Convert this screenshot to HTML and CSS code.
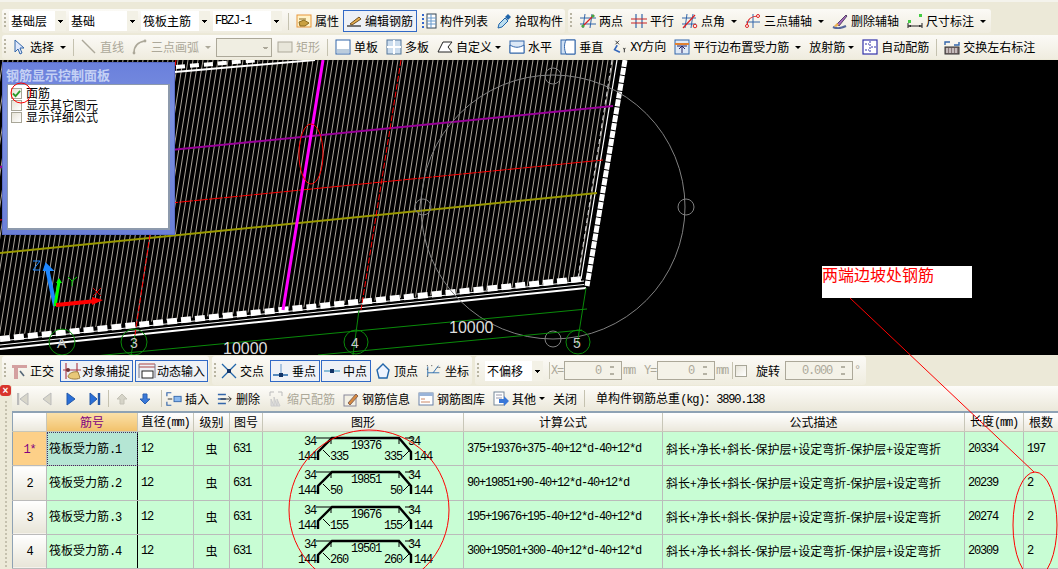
FILE: index.html
```html
<!DOCTYPE html>
<html lang="zh">
<head>
<meta charset="utf-8">
<title>钢筋编辑</title>
<link rel="stylesheet" href="styles.css">
</head>
<body>
<svg class="defs" xmlns="http://www.w3.org/2000/svg">
  <symbol id="i-prop" viewBox="0 0 16 16"><rect x="1" y="2" width="14" height="12" fill="#fff2c8" stroke="#e8963a"/><path d="M3 6h7M3 9l5-2 5 3-4 3H4z" fill="#c9a040" stroke="#8a6a20"/></symbol>
  <symbol id="i-edit" viewBox="0 0 16 16"><path d="M1 13h14" stroke="#222" stroke-width="1.2"/><path d="M4 11l9-7 2 2-9 6z" fill="#e8b050" stroke="#705020"/></symbol>
  <symbol id="i-list" viewBox="0 0 16 16"><path d="M1 2h2M1 6h2M1 10h2M1 14h2" stroke="#36c" stroke-width="2"/><rect x="6" y="1" width="9" height="14" fill="#fff" stroke="#345"/><path d="M6 5h9M6 8h9M6 11h9M10 1v14" stroke="#69c"/></symbol>
  <symbol id="i-pick" viewBox="0 0 16 16"><path d="M2 15l1-4 6-6 3 3-6 6z" fill="#bde" stroke="#26a"/><path d="M9 4l3-3 3 3-3 3z" fill="#26a"/></symbol>
  <symbol id="i-two" viewBox="0 0 16 16"><path d="M5 1L3 15M12 1l-2 14M0 5h16M0 11h16" stroke="#36a"/><path d="M2 14L14 2" stroke="#d22" stroke-width="1.2"/><circle cx="3" cy="13" r="1.6" fill="#4a4"/><circle cx="13" cy="3" r="1.6" fill="#4a4"/></symbol>
  <symbol id="i-par" viewBox="0 0 16 16"><path d="M5 1v14M11 1v14" stroke="#36a" stroke-width="1.2"/><path d="M0 6h16M0 10h16" stroke="#c22" stroke-width="1.2"/></symbol>
  <symbol id="i-ang" viewBox="0 0 16 16"><path d="M5 1L3 15M11 1L9 15M0 5h14M0 11h14" stroke="#36a"/><path d="M1 15L13 2" stroke="#d22" stroke-width="1.2"/><circle cx="13" cy="13" r="1.8" fill="none" stroke="#d22"/></symbol>
  <symbol id="i-arc" viewBox="0 0 16 16"><path d="M8 1v14M1 9h14" stroke="#36a"/><path d="M2 13C2 6 7 3 13 3" fill="none" stroke="#d22" stroke-width="1.2"/><circle cx="2" cy="13" r="1.5" fill="#fff" stroke="#d22"/><circle cx="13" cy="3" r="1.5" fill="#fff" stroke="#d22"/></symbol>
  <symbol id="i-del" viewBox="0 0 16 16"><path d="M1 14c4 2 9 1 13-1" stroke="#569" stroke-width="2" fill="none"/><path d="M5 11L14 2l1 1-8 10z" fill="#a86ac0" stroke="#546"/><path d="M2 13l3-3 2 2-3 2z" fill="#ecb050"/></symbol>
  <symbol id="i-dim" viewBox="0 0 16 16"><path d="M1 10v5M15 10v5M1 13h14" stroke="#222"/><path d="M1 13l3-1v2zM15 13l-3-1v2z" fill="#222"/><rect x="1" y="7" width="3" height="3" fill="#4c4"/><rect x="12" y="1" width="3" height="3" fill="#4c4"/></symbol>
  <symbol id="i-sel" viewBox="0 0 16 16"><path d="M4 1v12l3-3 2 5 2-1-2-5h4z" fill="#dfe8fb" stroke="#36a"/></symbol>
  <symbol id="i-line" viewBox="0 0 16 16"><path d="M1 1l13 13" stroke="#aca899" stroke-width="1.4"/></symbol>
  <symbol id="i-garc" viewBox="0 0 16 16"><path d="M2 14C2 7 6 3 13 2" fill="none" stroke="#aca899" stroke-width="1.6"/><circle cx="2" cy="14" r="1.4" fill="#aca899"/><circle cx="13" cy="2" r="1.4" fill="#aca899"/></symbol>
  <symbol id="i-rect" viewBox="0 0 16 16"><rect x="1" y="3" width="14" height="10" fill="#e8e6da" stroke="#aca899"/></symbol>
  <symbol id="i-one" viewBox="0 0 16 16"><rect x="1" y="1" width="14" height="14" fill="#fff" stroke="#36a"/><rect x="2" y="10" width="12" height="4" fill="#bcd"/></symbol>
  <symbol id="i-multi" viewBox="0 0 16 16"><rect x="1" y="1" width="14" height="14" fill="#cde" stroke="#579"/><path d="M8 1v14M1 8h14" stroke="#fff" stroke-width="2"/></symbol>
  <symbol id="i-cust" viewBox="0 0 16 16"><path d="M1 13L6 3h9l-4 5 4 5z" fill="#fff" stroke="#222"/></symbol>
  <symbol id="i-hor" viewBox="0 0 16 16"><rect x="1" y="2" width="14" height="12" fill="#dce8f6" stroke="#36a"/><path d="M1 6c5 3 9 3 14 0v8H1z" fill="#fff" stroke="#36a"/></symbol>
  <symbol id="i-ver" viewBox="0 0 16 16"><rect x="1" y="1" width="14" height="14" fill="#cfe0f4" stroke="#36a"/><path d="M6 1c-2 4-2 9 0 14h9V1z" fill="#fff" stroke="#36a"/></symbol>
  <symbol id="i-xy" viewBox="0 0 18 16"><path d="M7 6l-3 5 6 3" fill="none" stroke="#36b" stroke-width="1.8"/><path d="M5 1l4 4M9 1L5 5" stroke="#222"/><path d="M14 9l1 2 1-2M15 11v3" stroke="#222" fill="none"/></symbol>
  <symbol id="i-pe" viewBox="0 0 16 16"><rect x="1" y="1" width="14" height="14" fill="#dfe9f6" stroke="#36a"/><path d="M1 5h14" stroke="#e08030" stroke-width="2"/><path d="M8 14V8M5 10l3-3 3 3M3 7h10" stroke="#226" fill="none"/></symbol>
  <symbol id="i-auto" viewBox="0 0 16 16"><rect x="1" y="1" width="14" height="14" fill="#fff" stroke="#33a" stroke-width="1.2"/><path d="M8 2v12M3 5h4M3 11h4M9 8h5" stroke="#33a" stroke-dasharray="2 1"/></symbol>
  <symbol id="i-swap" viewBox="0 0 16 16"><path d="M1 6V3h5M15 3v3h-5" stroke="#36a" stroke-width="1.4" fill="none"/><rect x="1" y="8" width="14" height="7" fill="#877" stroke="#333"/><path d="M3 9v5M6 9v5M9 9v5M12 9v5" stroke="#fff"/></symbol>
  <symbol id="i-orth" viewBox="0 0 16 16"><path d="M1 2h15v3H7v11H3V5H1z" fill="#d4a0a0"/><path d="M9 8l4 5" stroke="#567" stroke-width="1.6"/></symbol>
  <symbol id="i-snap" viewBox="0 0 18 18"><path d="M3 1v16M14 1v16M0 8h18" stroke="#a34" stroke-width="1.1"/><circle cx="5" cy="8" r="2" fill="#733"/><path d="M5 15c0-4 6-6 10-5l2 6c-4 2-10 1-12-1z" fill="#e8c878" stroke="#a08040"/></symbol>
  <symbol id="i-dyn" viewBox="0 0 18 16"><path d="M1 1h16M1 4h16" stroke="#a44"/><path d="M1 1v14M17 1v14" stroke="#778"/><rect x="4" y="8" width="11" height="7" fill="#fff" stroke="#222"/></symbol>
  <symbol id="i-x" viewBox="0 0 16 16"><path d="M1 1l14 14M15 1L1 15" stroke="#26a" stroke-width="1.3"/><rect x="6" y="6" width="4" height="4" fill="#136"/></symbol>
  <symbol id="i-perp" viewBox="0 0 16 16"><path d="M8 1v12" stroke="#69c"/><path d="M0 12h15" stroke="#26a" stroke-width="1.5"/><rect x="6" y="10" width="4" height="4" fill="#136"/></symbol>
  <symbol id="i-mid" viewBox="0 0 16 16"><path d="M0 8h16" stroke="#6ac" stroke-width="1.5"/><rect x="6" y="6" width="4" height="4" fill="#136"/></symbol>
  <symbol id="i-vtx" viewBox="0 0 16 16"><path d="M8 1l6 6-2 8H4L2 7z" fill="#eef4ff" stroke="#26a" stroke-width="1.4"/></symbol>
  <symbol id="i-coord" viewBox="0 0 18 16"><path d="M2 3v11M2 10h13M14 2L8 10" stroke="#26a"/><path d="M1 2h2M1 6h2M1 14h2M6 2h2M13 4h3" stroke="#222" stroke-dasharray="1 1"/></symbol>
  <symbol id="i-first" viewBox="0 0 12 16"><path d="M1 2v12" stroke="#bbb" stroke-width="2.5"/><path d="M11 2v12L3 8z" fill="#d8d6ca" stroke="#bbb"/></symbol>
  <symbol id="i-prev" viewBox="0 0 12 16"><path d="M10 2v12L2 8z" fill="#d8d6ca" stroke="#bbb"/></symbol>
  <symbol id="i-next" viewBox="0 0 12 16"><path d="M2 2v12l8-6z" fill="#2a6fd8" stroke="#2358a8"/></symbol>
  <symbol id="i-last" viewBox="0 0 12 16"><path d="M1 2v12l7-6z" fill="#2a6fd8" stroke="#2358a8"/><path d="M10 2v12" stroke="#2358a8" stroke-width="2.4"/></symbol>
  <symbol id="i-up" viewBox="0 0 12 12"><path d="M6 1l5 5H8v5H4V6H1z" fill="#d6d4c8" stroke="#c4c2b6"/></symbol>
  <symbol id="i-down" viewBox="0 0 12 12"><path d="M6 11L1 6h3V1h4v5h3z" fill="#3a78d8" stroke="#2a60b0"/></symbol>
  <symbol id="i-ins" viewBox="0 0 18 16"><path d="M6 1H1v4M1 11v4h5" stroke="#36a" fill="none" stroke-width="1.3"/><path d="M2 8h5" stroke="#222"/><rect x="9" y="5" width="8" height="6" fill="#8ab8ee" stroke="#36a"/></symbol>
  <symbol id="i-rm" viewBox="0 0 18 16"><path d="M1 3h9M1 8h9M1 13h9" stroke="#36a" stroke-width="1.6"/><path d="M4 8h12M13 5l3 3-3 3" stroke="#222" fill="none"/></symbol>
  <symbol id="i-scale" viewBox="0 0 14 16"><path d="M1 1v4M1 1h4M9 1h4M13 1v4" stroke="#bbb"/><path d="M2 15V8l3 7V6l3 9V8l3 7z" fill="#ddd" stroke="#ccc"/></symbol>
  <symbol id="i-info" viewBox="0 0 16 16"><rect x="1" y="4" width="12" height="11" fill="#f3f0e4" stroke="#889"/><path d="M5 12l8-9 2 2-8 9z" fill="#d88a40" stroke="#865"/></symbol>
  <symbol id="i-lib" viewBox="0 0 16 14"><rect x="1" y="1" width="14" height="12" fill="#fff" stroke="#6a82a8"/><rect x="1" y="1" width="14" height="3" fill="#9ab4d8"/><path d="M3 7h4M3 10h9" stroke="#c86"/></symbol>
  <symbol id="i-oth" viewBox="0 0 16 16"><rect x="1" y="1" width="10" height="13" fill="#fff" stroke="#789"/><path d="M3 4h6M3 7h6" stroke="#99a"/><path d="M6 8h5V5l5 5-5 5v-3H6z" fill="#3a78d8"/></symbol>
</svg>

<div class="page">
  <div class="strip"></div>

  <div class="row r1">
    <div class="grp g1">
      <span class="grip"></span>
      <span class="combo w57">基础层<i class="cb"></i></span>
      <span class="combo w69">基础<i class="cb"></i></span>
      <span class="combo w69">筏板主筋<i class="cb"></i></span>
      <span class="combo w69"><b class="num">FBZJ-1</b><i class="cb"></i></span>
      <span class="sep"></span>
      <span class="it"><svg class="ic"><use href="#i-prop"/></svg>属性</span>
      <span class="it on"><svg class="ic"><use href="#i-edit"/></svg>编辑钢筋</span>
      <span class="it"><svg class="ic"><use href="#i-list"/></svg>构件列表</span>
      <span class="it"><svg class="ic"><use href="#i-pick"/></svg>拾取构件</span>
    </div>
    <div class="grp g2">
      <span class="grip wide"></span>
      <span class="it"><svg class="ic"><use href="#i-two"/></svg>两点</span>
      <span class="it"><svg class="ic"><use href="#i-par"/></svg>平行</span>
      <span class="it"><svg class="ic"><use href="#i-ang"/></svg>点角<i class="ar"></i></span>
      <span class="it"><svg class="ic"><use href="#i-arc"/></svg>三点辅轴<i class="ar"></i></span>
      <span class="it"><svg class="ic"><use href="#i-del"/></svg>删除辅轴</span>
      <span class="it"><svg class="ic"><use href="#i-dim"/></svg>尺寸标注<i class="ar"></i></span>
    </div>
  </div>

  <div class="row r2">
    <div class="grp gfull">
      <span class="grip tight"></span>
      <span class="it"><svg class="ic"><use href="#i-sel"/></svg>选择<i class="ar"></i></span>
      <span class="sep"></span>
      <span class="it off"><svg class="ic"><use href="#i-line"/></svg>直线</span>
      <span class="it off"><svg class="ic"><use href="#i-garc"/></svg>三点画弧<i class="ar dim"></i></span>
      <span class="combo w56 dis"><i class="cb dim"></i></span>
      <span class="it off"><svg class="ic"><use href="#i-rect"/></svg>矩形</span>
      <span class="sep"></span>
      <span class="it"><svg class="ic"><use href="#i-one"/></svg>单板</span>
      <span class="it"><svg class="ic"><use href="#i-multi"/></svg>多板</span>
      <span class="it"><svg class="ic"><use href="#i-cust"/></svg>自定义<i class="ar t"></i></span>
      <span class="it"><svg class="ic"><use href="#i-hor"/></svg>水平</span>
      <span class="it"><svg class="ic"><use href="#i-ver"/></svg>垂直</span>
      <span class="it"><svg class="ic"><use href="#i-xy"/></svg><span><b class="num">XY</b>方向</span></span>
      <span class="it"><svg class="ic"><use href="#i-pe"/></svg>平行边布置受力筋<i class="ar"></i></span>
      <span class="it">放射筋<i class="ar t"></i></span>
      <span class="it"><svg class="ic"><use href="#i-auto"/></svg>自动配筋</span>
      <span class="sep"></span>
      <span class="it"><svg class="ic"><use href="#i-swap"/></svg>交换左右标注</span>
    </div>
  </div>

  <div class="canvas">
    <svg class="scene" width="1058" height="295" viewBox="0 60 1058 295" xmlns="http://www.w3.org/2000/svg">
      <defs>
        <pattern id="hatch" width="5" height="8" patternUnits="userSpaceOnUse" patternTransform="skewX(-9)">
          <path d="M2.5 0v8" stroke="#aaa49a" stroke-width="1"/>
        </pattern>
      </defs>
      <polygon points="0,60 616,60 580,281 0,336" fill="url(#hatch)"/>
      <path d="M175 72L315 60" stroke="#fff" stroke-width="2"/>
      <path d="M176 67L260 60" stroke="#fff" stroke-width="4" stroke-dasharray="9 5"/>
      <path d="M0 349L586 288" stroke="#fff" stroke-width="2"/>
      <path d="M0 345L584 284.500" stroke="#fff" stroke-width="1"/>
      <path d="M0 339L582 279" stroke="#fff" stroke-width="6" stroke-dasharray="10 4"/>
      <path d="M0 341L584 281" stroke="#fff" stroke-width="1"/>
      <path d="M625 60L587 286" stroke="#fff" stroke-width="5" stroke-dasharray="7 1"/>
      <path d="M617 60L581 279" stroke="#fff" stroke-width="1.2"/>
      <path d="M612 60L578 278" stroke="#ddd" stroke-width="1" stroke-dasharray="5 3"/>

      <path d="M0 167L613 106" stroke="#990099" stroke-width="2"/>
      <path d="M0 220L603 160" stroke="#f00" stroke-width="1" stroke-dasharray="14 1"/>
      <path d="M0 253L597 193" stroke="#999900" stroke-width="2"/>
      <path d="M176 60L135 335" stroke="#f00" stroke-width="1" stroke-dasharray="6 2"/>
      <path d="M401 60L361 310" stroke="#f00" stroke-width="1" stroke-dasharray="6 2"/>
      <path d="M323 60L283 310" stroke="#f0f" stroke-width="3"/>

      <g fill="none" stroke="#808080">
        <circle cx="553" cy="207" r="132"/>
        <circle cx="553" cy="76" r="8"/>
        <circle cx="553" cy="339" r="8"/>
        <circle cx="423" cy="207" r="8"/>
        <circle cx="686" cy="207" r="8"/>
      </g>

      <g fill="none" stroke="#0a8a0a">
        <path d="M0 365L587 309"/>
        <path d="M318 355L582 330"/>
        <path d="M586 288L577 345"/>
        <path d="M359 310L353 355"/>
        <path d="M135 335L131 355"/>
        <circle cx="356" cy="342" r="12"/>
        <circle cx="578" cy="342" r="12"/>
        <circle cx="134" cy="342" r="13"/>
        <circle cx="62" cy="342" r="13"/>
      </g>
      <g class="lbl">
        <text x="57" y="348">A</text>
        <text x="130" y="348">3</text>
        <text x="351" y="348">4</text>
        <text x="573" y="348">5</text>
      </g>
      <text class="dimt" x="449" y="333">10000</text>
      <text class="dimt" x="223" y="354">10000</text>

      <path d="M55 306L47 268" stroke="#1e88ff" stroke-width="4"/>
      <path d="M44 270L46 264 52 270z" fill="#1e88ff" stroke="#1e88ff" stroke-width="2"/>
      <path d="M55 306L59 282" stroke="#0f0" stroke-width="3"/>
      <path d="M56 283L59 278 62 283z" fill="#0f0"/>
      <path d="M56 305L96 301" stroke="#f00" stroke-width="4"/>
      <path d="M92 297L103 300 92 305z" fill="#f00"/>
      <path d="M33 261h7l-7 9h7" stroke="#1e88ff" fill="none"/>
      <path d="M68 277l4 4 5-4M72 281v5" stroke="#0c0" fill="none"/>
      <path d="M93 288l8 8M101 288l-8 8" stroke="#c00" fill="none"/>
    </svg>

    <div class="panel">
      <div class="ptitle">钢筋显示控制面板</div>
      <div class="pbody">
        <label class="chk"><span class="box"><svg viewBox="0 0 10 10" class="tick"><path d="M1 5l3 3 5-6" fill="none" stroke="#2a9a2a" stroke-width="2"/></svg></span><span>面筋</span></label>
        <label class="chk"><span class="box"></span><span>显示其它图元</span></label>
        <label class="chk"><span class="box"></span><span>显示详细公式</span></label>
      </div>
    </div>

    <div class="note">两端边坡处钢筋</div>
  </div>

  <div class="row r3">
    <div class="grp g31">
      <span class="grip tight"></span>
      <span class="it"><svg class="ic"><use href="#i-orth"/></svg>正交</span>
      <span class="it on big"><svg class="ic ic18"><use href="#i-snap"/></svg>对象捕捉</span>
      <span class="it on big"><svg class="ic ic18"><use href="#i-dyn"/></svg>动态输入</span>
    </div>
    <div class="grp g32">
      <span class="grip tight"></span>
      <span class="it"><svg class="ic"><use href="#i-x"/></svg>交点</span>
      <span class="it on m2"><svg class="ic"><use href="#i-perp"/></svg>垂点</span>
      <span class="it on m1"><svg class="ic"><use href="#i-mid"/></svg>中点</span>
      <span class="it"><svg class="ic"><use href="#i-vtx"/></svg>顶点</span>
      <span class="it"><svg class="ic"><use href="#i-coord"/></svg>坐标</span>
    </div>
    <div class="grp g33">
      <span class="grip far"></span>
      <span class="combo w58">不偏移<i class="cb"></i></span>
      <span class="sep sepn"></span>
      <b class="num faint">X=</b>
      <span class="spin w58"><b class="num">0</b><i class="sp"></i></span>
      <b class="num faint">mm</b>
      <b class="num faint gapl">Y=</b>
      <span class="spin w58"><b class="num">0</b><i class="sp"></i></span>
      <b class="num faint">mm</b>
      <span class="sep sepn"></span>
      <span class="box box12"></span>
      <span class="lab">旋转</span>
      <span class="spin w68"><b class="num">0.000</b><i class="sp"></i></span>
      <b class="num faint">°</b>
    </div>
  </div>

  <div class="row r4">
    <span class="close">×</span>
    <div class="grp gt">
      <svg class="nav"><use href="#i-first"/></svg>
      <svg class="nav"><use href="#i-prev"/></svg>
      <svg class="nav"><use href="#i-next"/></svg>
      <svg class="nav navl"><use href="#i-last"/></svg>
      <span class="sep"></span>
      <svg class="nav2"><use href="#i-up"/></svg>
      <svg class="nav2"><use href="#i-down"/></svg>
      <span class="sep sepn"></span>
      <span class="it"><svg class="ic"><use href="#i-ins"/></svg>插入</span>
      <span class="it"><svg class="ic"><use href="#i-rm"/></svg>删除</span>
      <span class="it off"><svg class="ic"><use href="#i-scale"/></svg>缩尺配筋</span>
      <span class="it"><svg class="ic"><use href="#i-info"/></svg>钢筋信息</span>
      <span class="it"><svg class="ic"><use href="#i-lib"/></svg>钢筋图库</span>
      <span class="it"><svg class="ic"><use href="#i-oth"/></svg>其他<i class="ar t"></i></span>
      <span class="it">关闭</span>
      <span class="sep"></span>
      <span class="it total"><span>单构件钢筋总重<b class="num">(kg)</b>：<b class="num">3890.138</b></span></span>
    </div>
  </div>

  <div class="tablewrap">
    <div class="gutter"></div>
    <table class="grid">
      <colgroup>
        <col class="c0"><col class="c1"><col class="c2"><col class="c3"><col class="c4"><col class="c5"><col class="c6"><col class="c7"><col class="c8"><col class="c9">
      </colgroup>
      <thead>
        <tr>
          <th></th><th class="hot">筋号</th><th>直径<b class="num">(mm)</b></th><th>级别</th><th>图号</th><th>图形</th><th>计算公式</th><th>公式描述</th><th>长度<b class="num">(mm)</b></th><th>根数</th>
        </tr>
      </thead>
      <tbody>
        <tr>
          <th class="rh cur"><b class="num">1*</b></th><td class="nm sel">筏板受力筋<b class="num">.1</b></td><td class="num">12</td><td class="ctr">虫</td><td class="num">631</td>
          <td class="shape"><svg class="bar" width="200" height="33"><use href="#bar"/>
            <text x="41" y="13">34</text><text x="35" y="28">144</text><text x="67" y="28">335</text><text x="88" y="17">19376</text><text x="121" y="28">335</text><text x="145" y="13">34</text><text x="151" y="28">144</text></svg></td>
          <td class="num">375+19376+375-40+12*d-40+12*d</td><td class="ds">斜长+净长+斜长-保护层+设定弯折-保护层+设定弯折</td><td class="num">20334</td><td class="num">197</td>
        </tr>
        <tr>
          <th class="rh"><b class="num">2</b></th><td class="nm">筏板受力筋<b class="num">.2</b></td><td class="num">12</td><td class="ctr">虫</td><td class="num">631</td>
          <td class="shape"><svg class="bar" width="200" height="33"><use href="#bar"/>
            <text x="41" y="13">34</text><text x="35" y="28">144</text><text x="67" y="28">50</text><text x="88" y="17">19851</text><text x="127" y="28">50</text><text x="145" y="13">34</text><text x="151" y="28">144</text></svg></td>
          <td class="num">90+19851+90-40+12*d-40+12*d</td><td class="ds">斜长+净长+斜长-保护层+设定弯折-保护层+设定弯折</td><td class="num">20239</td><td class="num">2</td>
        </tr>
        <tr>
          <th class="rh"><b class="num">3</b></th><td class="nm">筏板受力筋<b class="num">.3</b></td><td class="num">12</td><td class="ctr">虫</td><td class="num">631</td>
          <td class="shape"><svg class="bar" width="200" height="33"><use href="#bar"/>
            <text x="41" y="13">34</text><text x="35" y="28">144</text><text x="67" y="28">155</text><text x="88" y="17">19676</text><text x="121" y="28">155</text><text x="145" y="13">34</text><text x="151" y="28">144</text></svg></td>
          <td class="num">195+19676+195-40+12*d-40+12*d</td><td class="ds">斜长+净长+斜长-保护层+设定弯折-保护层+设定弯折</td><td class="num">20274</td><td class="num">2</td>
        </tr>
        <tr>
          <th class="rh"><b class="num">4</b></th><td class="nm">筏板受力筋<b class="num">.4</b></td><td class="num">12</td><td class="ctr">虫</td><td class="num">631</td>
          <td class="shape"><svg class="bar" width="200" height="33"><use href="#bar"/>
            <text x="41" y="13">34</text><text x="35" y="28">144</text><text x="67" y="28">260</text><text x="88" y="17">19501</text><text x="121" y="28">260</text><text x="145" y="13">34</text><text x="151" y="28">144</text></svg></td>
          <td class="num">300+19501+300-40+12*d-40+12*d</td><td class="ds">斜长+净长+斜长-保护层+设定弯折-保护层+设定弯折</td><td class="num">20309</td><td class="num">2</td>
        </tr>
      </tbody>
    </table>
  </div>

  <svg class="overlay" width="1058" height="569" xmlns="http://www.w3.org/2000/svg">
    <symbol id="bar" viewBox="0 0 200 33">
      <path d="M55 28V20L69 6H136L148 20V28" fill="none" stroke="#000" stroke-width="2.4"/>
      <path d="M53 6H69M60 18L67 25M68 6V12M136 6V12M142 6H150M147 18L140 25" fill="none" stroke="#000" stroke-width="1"/>
    </symbol>
    <g fill="none" stroke="#f00">
      <circle cx="369" cy="510" r="80"/>
      <ellipse cx="1035" cy="525" rx="22" ry="53"/>
      <path d="M850 298L1034 472"/>
      <ellipse cx="311" cy="154" rx="12" ry="30"/>
      <circle cx="21" cy="93" r="10"/>
    </g>
  </svg>
</div>
</body>
</html>
```
FILE: styles.css
```css
* { box-sizing: border-box; }
html, body { margin: 0; padding: 0; }
body {
  width: 1058px;
  height: 569px;
  overflow: hidden;
  background: #ece9d8;
  font: 12px/16px "Noto Sans CJK SC", "Liberation Sans", sans-serif;
  color: #000;
}
.defs { display: none; }
.page { position: relative; width: 1058px; height: 569px; overflow: hidden; display: flex; flex-direction: column; }
.strip { height: 8px; flex: none; border-top: 2px solid #f4f3ec; }

.row { display: flex; flex: none; gap: 3px; padding-left: 2px; align-items: center; }
.r1 { height: 26px; }
.r2 { height: 26px; }
.r3 { height: 31px; }
.r4 {
  height: 25px;
  padding-left: 0;
  gap: 0;
  background: repeating-linear-gradient(transparent 0 2px, #c5c1ae 2px 4px) no-repeat 5px 13px / 2px 12px;
}

.grp {
  display: flex;
  align-items: center;
  height: 24px;
  border-radius: 3px;
  background: linear-gradient(#fbfaf6, #efecdf);
  white-space: nowrap;
}
.g1 { width: 563px; }
.g2 { width: 423px; }
.gfull { flex: 1; border-radius: 3px 0 0 3px; }
.g31 { width: 207px; height: 29px; }
.g32 { width: 260px; height: 29px; }
.g33 { width: 391px; height: 29px; }
.gt { flex: 1; height: 25px; padding-left: 5px; border-radius: 0; background: linear-gradient(#fdfcf9, #ebe8da); }

.grip {
  flex: none;
  width: 2px;
  height: 16px;
  margin: 0 3px 0 2px;
  background: repeating-linear-gradient(#b8b4a2 0 2px, transparent 2px 4px);
}
.grip.wide { margin-right: 4px; }
.grip.tight { margin-right: 1px; }
.grip.far { margin-right: 6px; }
.sep { flex: none; width: 1px; height: 17px; margin: 0 3px; background: #c5c2b0; }
.sepn { margin-right: 0; }

.it {
  display: inline-flex;
  align-items: center;
  gap: 3px;
  height: 100%;
  padding: 0 4px;
  flex: none;
}
.it.on { height: 22px; border: 1px solid #3169c6; background: #eef1f6; padding: 0 3px 0 2px; }
.it.on.big { gap: 1px; padding-right: 2px; margin-left: 2px; }
.it.m1 { margin-left: 1px; }
.it.m2 { margin-left: 2px; }
.it.off { color: #aca899; }
.it.total { margin-left: 4px; }
.ic { width: 16px; height: 16px; flex: none; }
.ic18 { width: 18px; height: 18px; }

.ar { width: 0; height: 0; margin-left: 3px; border: 3px solid transparent; border-top: 3px solid #000; border-bottom: 0; }
.ar.t { margin-left: 0; }
.ar.dim { border-top-color: #aca899; }

.combo {
  display: inline-flex;
  align-items: center;
  flex: none;
  height: 20px;
  padding-left: 2px;
  margin-right: 3px;
  background: #fff;
}
.combo.dis { background: #f0eee2; border: 1px solid #aca899; height: 19px; margin: 0 1px; }
.cb {
  margin-left: auto;
  width: 11px;
  height: 100%;
  flex: none;
  background: linear-gradient(#000, #000) no-repeat 3px 9px / 5px 1px, linear-gradient(#000, #000) no-repeat 4px 10px / 3px 1px, linear-gradient(#000, #000) no-repeat 5px 11px / 1px 1px, #f3f1e6;
}
.cb.dim { background: linear-gradient(#aca899, #aca899) no-repeat 3px 8px / 5px 1px, linear-gradient(#aca899, #aca899) no-repeat 4px 9px / 3px 1px, #f0eee2; }
.w56 { width: 56px; }
.w57 { width: 57px; }
.w58 { width: 58px; }
.w68 { width: 68px; }
.w69 { width: 69px; }

.num {
  font: 400 12px/16px "Liberation Mono", monospace;
  letter-spacing: -1.2px;
}
.faint { color: #aca899; margin: 0 1px; flex: none; }
.gapl { margin-left: 8px; }
.lab { margin: 0 5px 0 9px; flex: none; }

.spin {
  position: relative;
  display: inline-flex;
  align-items: center;
  justify-content: flex-end;
  flex: none;
  height: 19px;
  padding-right: 20px;
  color: #aca899;
  border: 1px solid #aca899;
  background: #f4f2e8;
}
.sp {
  position: absolute;
  right: 5px;
  top: 3px;
  width: 8px;
  height: 11px;
  background: linear-gradient(#b5b2a4, #b5b2a4) no-repeat 2px 1px / 4px 2px, linear-gradient(#b5b2a4, #b5b2a4) no-repeat 2px 8px / 4px 2px;
}
.box {
  display: inline-block;
  width: 11px;
  height: 11px;
  flex: none;
  border: 1px solid #a8a698;
  background: linear-gradient(135deg, #e6e3d6, #fff);
}
.box12 { width: 12px; height: 12px; margin-left: 2px; }

.canvas { position: relative; height: 295px; flex: none; background: #000; overflow: hidden; }
.scene { display: block; }
.lbl text { font: 14px "Liberation Sans", sans-serif; fill: #ccc; }
.dimt { font: 16px "Liberation Sans", sans-serif; fill: #ddd; }

.panel {
  position: absolute;
  left: 2px;
  top: 2px;
  width: 173px;
  height: 173px;
  padding: 0 4px 4px;
  border: 1px solid #5a6cc8;
  background: linear-gradient(#6a80dc, #7d92e0 30%, #6b80d8);
  display: flex;
  flex-direction: column;
}
.ptitle { height: 21px; margin-left: -1px; line-height: 23px; font-weight: 700; font-size: 13px; color: #c4d0f4; white-space: nowrap; flex: none; }
.pbody { flex: 1; background: #fff; border: 2px solid #8d9aac; border-width: 1px 2px 2px 1px; padding: 2px 3px; }
.chk { display: flex; align-items: center; gap: 4px; height: 12px; line-height: 12px; white-space: nowrap; }
.tick { display: block; width: 9px; height: 9px; }

.note {
  position: absolute;
  left: 822px;
  top: 206px;
  width: 150px;
  height: 32px;
  background: #fff;
  color: #f00;
  font-size: 16px;
  line-height: 17px;
}

.close {
  flex: none;
  width: 11px;
  height: 11px;
  margin: -17px 1px 0 0;
  border-radius: 3px;
  background: #d8342c;
  color: #fff;
  font: 700 10px/11px "Liberation Sans", sans-serif;
  text-align: center;
}
.nav { width: 12px; height: 16px; margin-right: 12px; flex: none; }
.navl { margin-right: 4px; }
.nav2 { width: 12px; height: 12px; margin: 0 7px 0 4px; flex: none; }

.tablewrap { flex: 1; display: flex; min-height: 0; }
.gutter {
  flex: none;
  width: 12px;
  background: repeating-linear-gradient(transparent 0 2px, #c5c1ae 2px 4px) no-repeat 5px 0 / 2px 100%;
}
.grid {
  flex: none;
  width: 1046px;
  height: 158px;
  table-layout: fixed;
  border-collapse: collapse;
  border-top: 2px solid #8ea2b4;
  border-left: 1px solid #8ea2b4;
  background: #c8fdd4;
}
.c0 { width: 34px; }
.c1 { width: 91px; }
.c2 { width: 56px; }
.c3 { width: 36px; }
.c4 { width: 33px; }
.c5 { width: 201px; }
.c6 { width: 199px; }
.c7 { width: 302px; }
.c8 { width: 59px; }
.c9 { width: 35px; }
.grid thead th {
  height: 19px;
  padding: 0;
  font-weight: 400;
  white-space: nowrap;
  background: linear-gradient(#fff, #ebe8dc);
  border-right: 1px solid #c8c6b8;
  border-bottom: 1px solid #c8c6b8;
}
.grid thead th.hot { background: linear-gradient(#fae0a8, #f2c26c); color: #800080; }
.grid th.rh {
  height: 34px;
  padding: 0;
  font-weight: 400;
  background: linear-gradient(#fff, #e8e5d8);
  border-right: 1px solid #bbb;
  border-bottom: 1px solid #bbb;
}
.grid th.rh.cur { background: #fdd088; color: #800080; }
.grid td {
  height: 34px;
  padding: 0 0 0 3px;
  white-space: nowrap;
  overflow: hidden;
  border-right: 1px solid #bbb;
  border-bottom: 1px solid #bbb;
}
.grid td.nm { border-right: 1px solid #000; padding-left: 2px; }
.grid td.sel { background: #b5e6d4; outline: 1px dotted #403060; outline-offset: -1px; }
.grid td.ctr { text-align: center; padding: 0; }
.grid td.shape { padding: 0; }
.bar { display: block; }
.bar text { font: 12px "Liberation Mono", monospace; letter-spacing: -1.2px; fill: #000; }

.overlay { position: absolute; left: 0; top: 0; pointer-events: none; }
```
